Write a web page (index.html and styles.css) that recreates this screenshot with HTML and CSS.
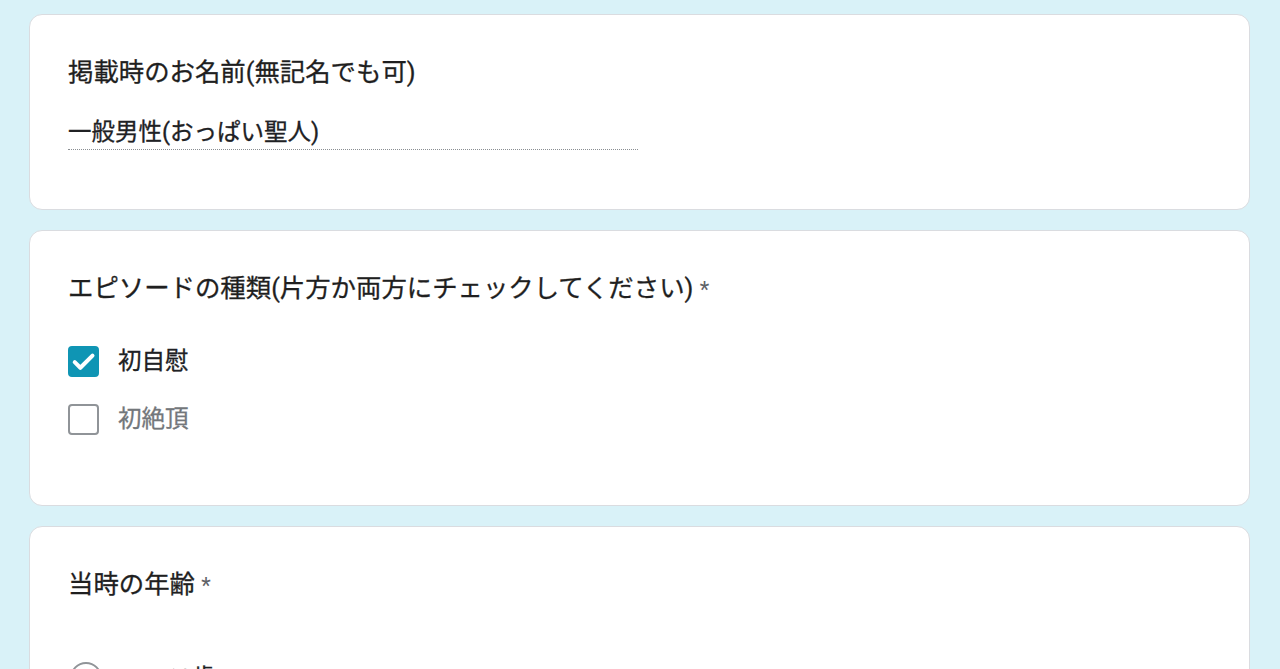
FILE: index.html
```html
<!DOCTYPE html>
<html lang="ja">
<head>
<meta charset="utf-8">
<link rel="stylesheet" href="styles.css">
</head>
<body>
<main class="form">
  <section class="card card-name">
    <div class="q-title">掲載時のお名前(無記名でも可)</div>
    <div class="answer"><span class="answer-text">一般男性(おっぱい聖人)</span></div>
  </section>

  <section class="card card-episode">
    <div class="q-title">エピソードの種類(片方か両方にチェックしてください) <span class="req">*</span></div>
    <ul class="options">
      <li class="option">
        <span class="checkbox checked">
          <svg viewBox="0 0 24 24" width="27" height="27"><path d="M4.2 12.6l5 5L20 6.8" fill="none" stroke="#fff" stroke-width="3.6" stroke-linecap="round" stroke-linejoin="round"/></svg>
        </span>
        <span class="opt-label">初自慰</span>
      </li>
      <li class="option">
        <span class="checkbox"></span>
        <span class="opt-label muted">初絶頂</span>
      </li>
    </ul>
  </section>

  <section class="card card-age">
    <div class="q-title">当時の年齢 <span class="req">*</span></div>
    <ul class="options radios">
      <li class="option">
        <span class="radio"></span>
        <span class="opt-label">〜12歳</span>
      </li>
    </ul>
  </section>
</main>
</body>
</html>
```

FILE: styles.css
```css
html, body {
  margin: 0;
  padding: 0;
}

body {
  background: #d9f2f8;
  font-family: Roboto, "Noto Sans CJK JP", "Noto Sans", sans-serif;
  color: #202124;
  height: 669px;
  overflow: hidden;
}

.form {
  display: flex;
  flex-direction: column;
  gap: 20px;
  padding: 14px 30px 0 29px;
}

.card {
  background: #fff;
  border: 1.6px solid #dadce0;
  border-radius: 13px;
  padding: 38px 38px;
}

.q-title {
  font-size: 25.4px;
  line-height: 38px;
  height: 38px;
  white-space: nowrap;
  color: #1f1f1f;
  -webkit-text-stroke: 0.3px #1f1f1f;
}

.req {
  color: #5f6368;
  font-size: 22px;
  -webkit-text-stroke: 0;
}

.answer {
  margin-top: 24px;
  margin-bottom: 21px;
  width: 570px;
  border-bottom: 1.5px dotted #8a8e92;
}

.answer-text {
  display: block;
  font-size: 23.5px;
  line-height: 34px;
  height: 34px;
  -webkit-text-stroke: 0.3px #202124;
}

.options {
  list-style: none;
  margin: 30px 0 24px;
  padding: 0;
  display: flex;
  flex-direction: column;
  gap: 10px;
}

.option {
  display: flex;
  align-items: center;
  height: 48px;
}

.checkbox {
  box-sizing: border-box;
  width: 31px;
  height: 31px;
  border-radius: 4px;
  border: 2.6px solid #909498;
  display: flex;
  align-items: center;
  justify-content: center;
  flex: none;
}

.checkbox.checked {
  background: #0f95b4;
  border-color: #0f95b4;
}

.opt-label {
  margin-left: 19px;
  font-size: 23.5px;
  line-height: 34px;
  color: #202124;
  -webkit-text-stroke: 0.3px #202124;
}

.opt-label.muted {
  color: #73777b;
  -webkit-text-stroke: 0.3px #73777b;
}

.radios {
  margin-top: 51px;
}

.radio {
  box-sizing: border-box;
  width: 32px;
  height: 32px;
  border-radius: 50%;
  border: 2.6px solid #909498;
  flex: none;
  margin-left: 2px;
}

.radios .opt-label {
  margin-left: 40px;
}
```
